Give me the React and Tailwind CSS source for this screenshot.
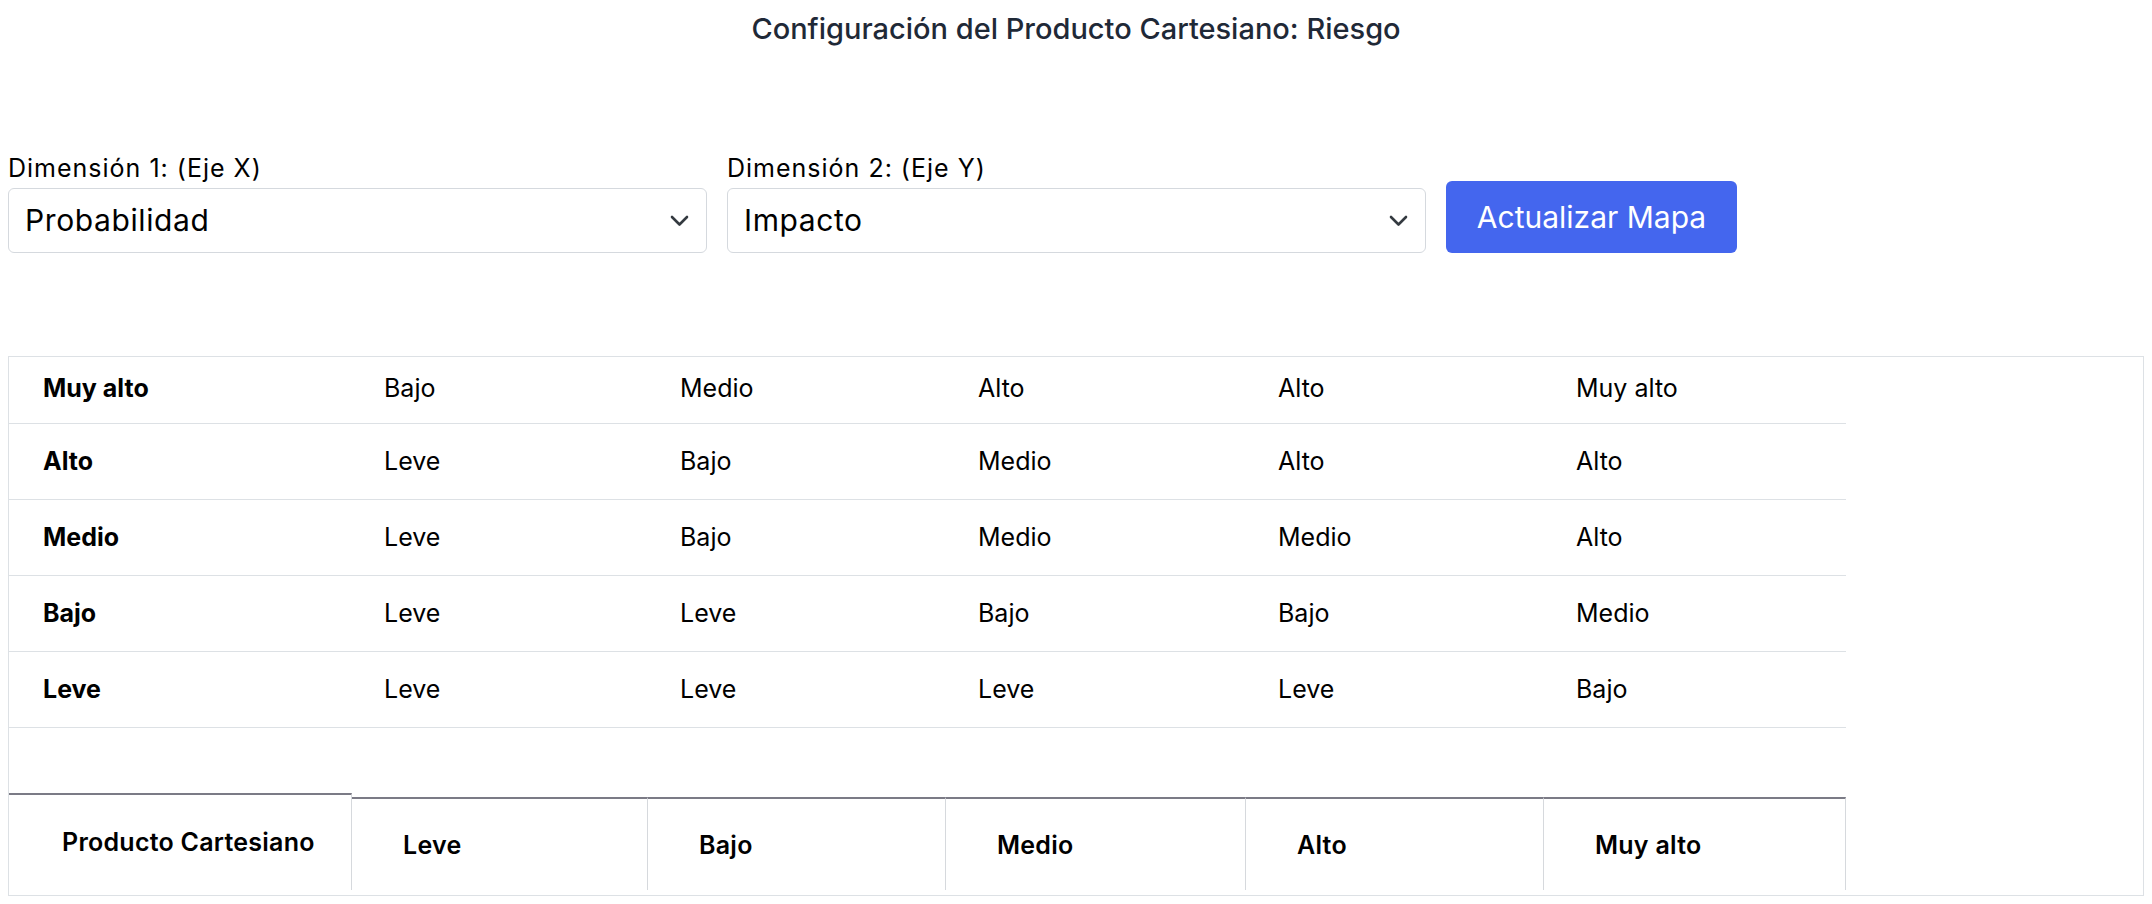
import { useState } from "react";

const niveles = ["Leve", "Bajo", "Medio", "Alto", "Muy alto"];

// filas de la matriz, de arriba (Muy alto) hacia abajo (Leve)
const matriz = [
  { eje: "Muy alto", valores: ["Bajo", "Medio", "Alto", "Alto", "Muy alto"] },
  { eje: "Alto", valores: ["Leve", "Bajo", "Medio", "Alto", "Alto"] },
  { eje: "Medio", valores: ["Leve", "Bajo", "Medio", "Medio", "Alto"] },
  { eje: "Bajo", valores: ["Leve", "Leve", "Bajo", "Bajo", "Medio"] },
  { eje: "Leve", valores: ["Leve", "Leve", "Leve", "Leve", "Bajo"] },
];

const columnas = "grid grid-cols-[343px_296px_298px_300px_298px_302px]";

function Chevron() {
  return (
    <svg
      className="pointer-events-none absolute right-[18px] top-1/2 -translate-y-1/2"
      width="19"
      height="12"
      viewBox="0 0 19 12"
      fill="none"
    >
      <path d="M2 2l7.5 7.5L17 2" stroke="#343a40" strokeWidth="2.6" strokeLinecap="round" strokeLinejoin="round" />
    </svg>
  );
}

function Selector({ label, value, onChange, options }) {
  return (
    <div className="w-[699px]">
      <label className="block text-[25px] leading-[30px] tracking-[0.04em] mb-[5px] text-black">{label}</label>
      <div className="relative">
        <select
          value={value}
          onChange={(e) => onChange(e.target.value)}
          className="w-full h-[65px] appearance-none rounded-md border border-[#d5d9de] bg-white pl-4 pr-12 text-[30px] tracking-[0.02em] text-black outline-none"
        >
          {options.map((o) => (
            <option key={o}>{o}</option>
          ))}
        </select>
        <Chevron />
      </div>
    </div>
  );
}

export default function App() {
  const [dimX, setDimX] = useState("Probabilidad");
  const [dimY, setDimY] = useState("Impacto");

  return (
    <div className="min-h-screen bg-white px-2 font-['Inter',sans-serif] text-black">
      <h2 className="pt-[11px] text-center text-[29px] leading-[36px] font-medium text-[#1f2937]">
        Configuración del Producto Cartesiano: Riesgo
      </h2>

      <div className="mt-[106px] flex items-end gap-5">
        <Selector
          label="Dimensión 1: (Eje X)"
          value={dimX}
          onChange={setDimX}
          options={["Probabilidad", "Impacto"]}
        />
        <Selector
          label="Dimensión 2: (Eje Y)"
          value={dimY}
          onChange={setDimY}
          options={["Impacto", "Probabilidad"]}
        />
        <button className="h-[72px] w-[291px] rounded-md bg-[#4466ee] text-[30px] text-white">
          Actualizar Mapa
        </button>
      </div>

      <div className="mt-[103px] h-[540px] border border-[#dde1e5]">
        <div className="w-[1837px]">
          {matriz.map((fila, i) => (
            <div
              key={fila.eje}
              className={`${columnas} items-center border-b border-[#dde1e5] text-[25px] ${i === 0 ? "h-[67px] pb-[3px]" : "h-[76px]"}`}
            >
              <div className="pl-[34px] font-bold">{fila.eje}</div>
              {fila.valores.map((v, j) => (
                <div key={j} className="pl-8">{v}</div>
              ))}
            </div>
          ))}

          <div className="h-[65px]" />

          <div className={`${columnas} items-end text-[25px] tracking-[0.01em] font-semibold`}>
            <div className="flex h-[97px] items-center border-t-2 border-r border-t-[#7b7b86] border-r-[#d6d9dd] pl-[53px]">
              Producto Cartesiano
            </div>
            {niveles.map((n) => (
              <div
                key={n}
                className="flex h-[93px] items-center border-t-2 border-r border-t-[#7b7b86] border-r-[#d6d9dd] pl-[51px] pt-[2px]"
              >
                {n}
              </div>
            ))}
          </div>
        </div>
      </div>
    </div>
  );
}
